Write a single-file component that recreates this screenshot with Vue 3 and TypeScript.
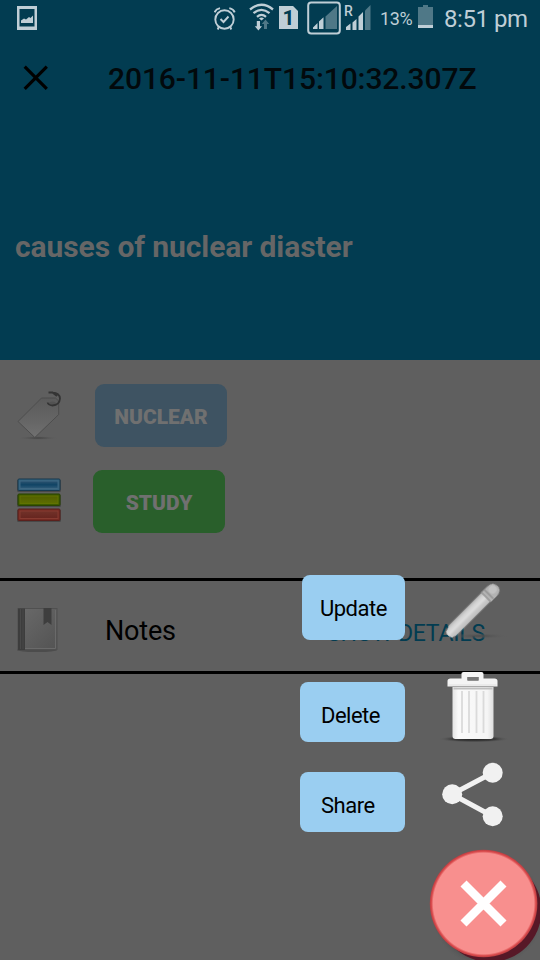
<script setup lang="ts">
interface Tag {
  label: string
  kind: 'topic' | 'category'
}

const title = '2016-11-11T15:10:32.307Z'
const headline = 'causes of nuclear diaster'
const tags: Tag[] = [
  { label: 'NUCLEAR', kind: 'topic' },
  { label: 'STUDY', kind: 'category' },
]
const actions: string[] = ['Update', 'Delete', 'Share']
</script>

<template>
  <div class="screen">
    <header class="header">
      <div class="status">
        <svg class="s-picture" width="20" height="24" viewBox="0 0 20 24">
          <path fill="#bfced6" fill-rule="evenodd" d="M0 0H20V24H0ZM2.500 3V20.500H17.500V3Z" />
          <path fill="#bfced6" d="M4 17V14.500L7 12.500L9 13.500L12 11L13.500 12L16 9.500V17Z" />
        </svg>
        <svg class="s-alarm" width="22" height="26" viewBox="0 0 22 26" fill="none" stroke="#bfced6" stroke-width="1.9">
          <circle cx="10.500" cy="14.500" r="9.200" />
          <path d="M6.500 14L9.500 17L14.500 11.500M.6 7.300Q1.800 4.200 6 3.200M20.700 7.300Q19.500 4.200 15.300 3.200M5 21.500L3.700 24.500M16 21.500L17.300 24.500" />
        </svg>
        <svg class="s-wifi" width="26" height="28" viewBox="0 0 26 28">
          <g fill="none" stroke="#bfced6" stroke-width="2.300">
            <path d="M1 6.500Q12.500-3 24 6.500M4.500 10.200Q12.500 3.600 20.500 10.200M8 13.800Q12.500 10 17 13.800" />
          </g>
          <path fill="#bfced6" d="M10 15.500Q12.500 13.500 15 15.500L12.500 17.500ZM7.800 18H11V23.200H13L9.400 27.500L5.800 23.200H7.800Z" />
          <path fill="#4f7887" d="M16.500 16.500L20.200 21H18V26H15V21H12.800Z" />
        </svg>
        <span class="s-sim">1</span>
        <svg class="s-signal" width="34" height="34" viewBox="0 0 34 34">
          <rect x="1.200" y="1.500" width="31.600" height="31" rx="3" fill="none" stroke="#bfced6" stroke-width="2" />
          <path fill="#bfced6" d="M6 28V26.500L10.500 22V28ZM12 28V20.500L16.500 16.200V28Z" />
          <path fill="#4f7887" d="M18.500 28V15.500L30 5V28Z" />
        </svg>
        <span class="s-roaming">R</span>
        <svg class="s-bars" width="25" height="26" viewBox="0 0 25 26">
          <path fill="#bfced6" d="M0 25V22L4.500 18.500V25ZM6.500 25V17.500L10.500 14V25ZM12.500 25V11.500L17 7V25Z" />
          <path fill="#4f7887" d="M19 25V5.500L24.500 0V25Z" />
        </svg>
        <span class="s-percent">13%</span>
        <svg class="s-battery" width="15" height="24" viewBox="0 0 15 24">
          <path fill="#4f7887" d="M0 2H5V0H10V2H15V20H0Z" />
          <path fill="#bfced6" d="M0 20H15V23H0Z" />
        </svg>
        <span class="s-time">8:51 pm</span>
      </div>
      <div class="titlebar">
        <svg width="26" height="26" viewBox="0 0 26 26" stroke="#000" stroke-width="3.200">
          <path d="M1.700 1.700L23.800 23.800M23.800 1.700L1.700 23.800" />
        </svg>
        <h1>{{ title }}</h1>
      </div>
      <h2>{{ headline }}</h2>
    </header>

    <section class="tags">
      <div v-for="tag in tags" :key="tag.label" class="tag-row" :class="tag.kind">
        <svg v-if="tag.kind === 'topic'" width="48" height="55" viewBox="0 0 48 55">
          <defs>
            <linearGradient id="tagFill" x1="0" y1="0" x2="0" y2="1">
              <stop offset="0" stop-color="#5a5a5a" />
              <stop offset=".6" stop-color="#666" />
              <stop offset="1" stop-color="#717171" />
            </linearGradient>
            <radialGradient id="tagShade">
              <stop offset="0" stop-color="#3d3d3d" />
              <stop offset="1" stop-color="#5f5f5f" stop-opacity="0" />
            </radialGradient>
          </defs>
          <ellipse cx="22" cy="50" rx="21" ry="2" fill="url(#tagShade)" />
          <path d="M2 33.500L25.500 10H39.500L42.700 13V26.500L18.800 49.500Z" fill="url(#tagFill)" stroke="#4b4b4b" stroke-width=".9" />
          <ellipse cx="36.500" cy="15.500" rx="3.500" ry="2" fill="#525252" />
          <path d="M32.500 4.500H36.500L41 8M36.500 4.500Q43.500 5 44 10.500Q43.500 17 36.500 17.500Q32 17 31.700 14.500" fill="none" stroke="#343434" stroke-width="1.800" />
        </svg>
        <svg v-else width="48" height="48" viewBox="0 0 48 48">
          <defs>
            <linearGradient id="blueBar" x1="0" y1="0" x2="0" y2="1"><stop stop-color="#2d536f" /><stop offset=".5" stop-color="#104465" /><stop offset="1" stop-color="#2f5b78" /></linearGradient>
            <linearGradient id="greenBar" x1="0" y1="0" x2="0" y2="1"><stop stop-color="#525f00" /><stop offset="1" stop-color="#5d6d00" /></linearGradient>
            <linearGradient id="redBar" x1="0" y1="0" x2="0" y2="1"><stop stop-color="#713229" /><stop offset="1" stop-color="#67251f" /></linearGradient>
          </defs>
          <g fill="#484848"><rect x="1" y="1.500" width="44" height="12.500" rx="1.500" /><rect x="1" y="16.500" width="44" height="12.500" rx="1.500" /><rect x="1" y="31.500" width="44" height="12.500" rx="1.500" /></g>
          <g stroke-width="1">
            <rect x="2" y="1" width="42" height="11.500" rx="1" fill="#35627d" stroke="#17394f" />
            <rect x="4" y="3" width="38" height="7.500" fill="url(#blueBar)" stroke="#3d6782" />
            <rect x="2" y="16" width="42" height="11.500" rx="1" fill="#3e5900" stroke="#294400" />
            <rect x="4" y="18" width="38" height="7.500" fill="url(#greenBar)" stroke="#617300" />
            <rect x="2" y="31" width="42" height="11.500" rx="1" fill="#752a22" stroke="#5b211d" />
            <rect x="4" y="33" width="38" height="7.500" fill="url(#redBar)" stroke="#863b31" />
          </g>
        </svg>
        <span class="tag">{{ tag.label }}</span>
      </div>
    </section>

    <section class="notes">
      <svg width="44" height="46" viewBox="0 0 44 46">
        <defs>
          <linearGradient id="bookFill" x1="0" y1="0" x2="1" y2="1"><stop stop-color="#6a6a6a" /><stop offset="1" stop-color="#535353" /></linearGradient>
        </defs>
        <ellipse cx="21" cy="43" rx="20" ry="2" fill="#4c4c4c" />
        <rect x="2" y="1.500" width="39" height="41" fill="url(#bookFill)" stroke="#505050" />
        <path d="M3.500 41.500H39.500V3" fill="none" stroke="#6a6a6a" />
        <path d="M2 1.500H9V43H2Z" fill="#3d3d3d" />
        <path d="M4.500 2V42M7 2V42" stroke="#494949" />
        <path d="M27.500 1H35.500V18L31.500 15L27.500 18Z" fill="#3e3e3e" />
      </svg>
      <span class="notes-label">Notes</span>
      <span class="details">SHOW DETAILS</span>
    </section>

    <aside class="menu">
      <div v-for="action in actions" :key="action" class="action" :class="action.toLowerCase()">
        <span class="action-label">{{ action }}</span>
        <svg v-if="action === 'Update'" width="72" height="72" viewBox="0 0 72 72">
          <defs>
            <linearGradient id="pencilBody" x1="0" y1="0" x2="0" y2="1">
              <stop stop-color="#b4b4b4" /><stop offset=".25" stop-color="#d2d2d2" /><stop offset=".5" stop-color="#dedede" /><stop offset=".7" stop-color="#cacaca" /><stop offset="1" stop-color="#bdbdbd" />
            </linearGradient>
            <radialGradient id="pencilShade"><stop stop-color="#4a4a4a" /><stop offset="1" stop-color="#5f5f5f" stop-opacity="0" /></radialGradient>
          </defs>
          <ellipse cx="42" cy="61" rx="29" ry="3" fill="url(#pencilShade)" />
          <g class="soft" transform="translate(10.500 59.500) rotate(-45)">
            <path d="M0-3.500L7-6.200H54V6.200H5L0 4.500Q-2 0 0-3.500Z" fill="url(#pencilBody)" />
            <path d="M53-6.500H61Q69-6.500 69 .5Q69 7 61 7H53Z" fill="#b3b3b3" />
            <path d="M53-6.500V6.500M57-6.500V6.500" stroke="#929292" stroke-width="1.400" />
            <ellipse cx="63" cy="-.5" rx="4" ry="4" fill="#c2c2c2" />
          </g>
        </svg>
        <svg v-else-if="action === 'Delete'" width="72" height="74" viewBox="0 0 72 74">
          <defs>
            <linearGradient id="binFill"><stop stop-color="#e4e4e4" /><stop offset=".14" stop-color="#fafafa" /><stop offset=".85" stop-color="#f5f5f5" /><stop offset="1" stop-color="#dedede" /></linearGradient>
            <radialGradient id="binShade"><stop stop-color="#222" /><stop offset=".6" stop-color="#3d3d3d" /><stop offset="1" stop-color="#5f5f5f" stop-opacity="0" /></radialGradient>
          </defs>
          <ellipse cx="36" cy="69" rx="36" ry="3.500" fill="url(#binShade)" />
          <g class="soft" transform="translate(-.5 0)">
            <path d="M15 17H56V66Q56 69 53 69H18Q15 69 15 66Z" fill="url(#binFill)" />
            <path d="M16 18.500H55" stroke="#bfbfbf" stroke-width="2" />
            <path d="M24.500 21V63M31.500 21V63M39 21V63M46 21V63" stroke="#dadada" stroke-width="1.800" />
            <path fill-rule="evenodd" d="M10 16.500V11Q10 8.500 13 8.500H24V3.500Q24 2 26 2H44Q46 2 46 4V8.500H57Q60 8.500 60 11V16.500ZM30 7V10.500H41V7Z" fill="#f4f4f4" />
            <path d="M30 7H41V10.500H30Z" fill="#777" />
            <path d="M11 15H59" stroke="#e0e0e0" />
          </g>
        </svg>
        <svg v-else width="72" height="68" viewBox="0 0 72 68">
          <path d="M54.700 11.700L14 33.300L54.700 55.200" fill="none" stroke="#f1f1f1" stroke-width="5" />
          <g fill="#f1f1f1"><circle cx="54.700" cy="11.700" r="10" /><circle cx="14.200" cy="33.300" r="10" /><circle cx="54.700" cy="55.200" r="10" /></g>
        </svg>
      </div>
    </aside>

    <svg class="fab" width="120" height="120" viewBox="0 0 120 120">
      <defs>
        <radialGradient id="fabShade"><stop offset=".86" stop-color="#333" stop-opacity=".3" /><stop offset="1" stop-color="#555" stop-opacity="0" /></radialGradient>
        <radialGradient id="fabFill"><stop offset=".935" stop-color="#f88f8e" /><stop offset=".97" stop-color="#d94a4c" /><stop offset="1" stop-color="#b93d41" /></radialGradient>
      </defs>
      <circle cx="68" cy="71" r="57" fill="url(#fabShade)" />
      <circle cx="70" cy="70.500" r="51.500" fill="#571827" />
      <circle cx="63.600" cy="63.500" r="53.800" fill="url(#fabFill)" />
      <path d="M43.500 43.500L83.500 83.500M83.500 43.500L43.500 83.500" stroke="#fff" stroke-width="8.500" />
    </svg>
  </div>
</template>

<style>
body {
  margin: 0;
}
</style>

<style scoped>
.screen {
  position: relative;
  width: 540px;
  height: 960px;
  overflow: hidden;
  background: #5f5f5f;
  font-family: Roboto, sans-serif;
  color: #000;
}
svg {
  display: block;
  flex: none;
}
.soft {
  filter: blur(0.6px);
}
.header {
  height: 360px;
  background: #023c51;
}
.status {
  display: flex;
  height: 38px;
  color: #bfced6;
  white-space: nowrap;
}
.s-picture {
  margin: 6px 0 0 17px;
}
.s-alarm {
  margin: 5px 0 0 177px;
}
.s-wifi {
  margin: 3px 0 0 13px;
}
.s-sim {
  width: 19px;
  height: 23px;
  margin: 6px 0 0 4px;
  background: #bfced6;
  clip-path: polygon(0 0, 74% 0, 100% 22%, 100% 100%, 0 100%);
  color: #023c51;
  font: 700 21px/24px Roboto, sans-serif;
  text-align: center;
}
.s-signal {
  margin: 1px 0 0 9px;
}
.s-roaming {
  width: 6px;
  margin: 3px 0 0 3px;
  font-size: 14px;
  font-weight: 500;
  line-height: 16px;
}
.s-bars {
  margin: 5px 0 0 -4px;
}
.s-percent {
  width: 33px;
  margin: 9px 0 0 9px;
  font-size: 18px;
  line-height: 20px;
  letter-spacing: -0.4px;
}
.s-battery {
  margin: 5px 0 0 5px;
}
.s-time {
  margin: 4px 0 0 11px;
  font-size: 24px;
  line-height: 30px;
  letter-spacing: -0.45px;
}
.titlebar {
  display: flex;
  align-items: center;
  height: 80px;
  padding-left: 23px;
}
h1 {
  margin: 1px 0 0 59px;
  font-size: 30px;
  font-weight: 500;
  line-height: 40px;
  letter-spacing: -0.1px;
  color: #02090c;
}
h2 {
  margin: 109px 0 0 15px;
  font-size: 30px;
  font-weight: 700;
  line-height: 40px;
  letter-spacing: -0.08px;
  color: #666;
}
.tags {
  display: grid;
  gap: 23px;
  height: 194px;
  padding: 24px 0 0 16px;
  align-content: start;
}
.tag-row {
  display: flex;
  align-items: center;
  height: 63px;
}
.tag {
  display: flex;
  justify-content: center;
  width: 132px;
  height: 63px;
  margin-left: 31px;
  border-radius: 9px;
  background: #3e5362;
  font-size: 21px;
  font-weight: 900;
  line-height: 67px;
  color: #707070;
}
.category .tag {
  margin-left: 29px;
  background: #295f2b;
}
.notes {
  display: flex;
  height: 90px;
  padding-left: 16px;
  border-top: 3px solid #000;
  border-bottom: 3px solid #000;
}
.notes svg {
  margin-top: 26px;
}
.notes-label {
  width: 222px;
  margin: 30px 0 0 45px;
  font-size: 27px;
  line-height: 40px;
  letter-spacing: -0.2px;
}
.details {
  margin-top: 33px;
  font-size: 23px;
  line-height: 40px;
  letter-spacing: -0.22px;
  color: #023c51;
}
.menu {
  position: absolute;
  top: 575px;
  left: 300px;
  width: 210px;
}
.action {
  display: flex;
  justify-content: space-between;
  height: 90px;
}
.update {
  height: 107px;
}
.action-label {
  width: 84px;
  height: 60px;
  padding-left: 21px;
  border-radius: 8px;
  background: #9acef1;
  font-size: 22px;
  line-height: 68px;
  letter-spacing: -0.5px;
}
.update .action-label {
  width: 85px;
  height: 65px;
  margin-left: 2px;
  padding-left: 18px;
}
.delete svg {
  margin-top: -12px;
}
.share svg {
  margin-top: -11px;
}
.fab {
  position: absolute;
  right: 0;
  bottom: 0;
}
</style>
